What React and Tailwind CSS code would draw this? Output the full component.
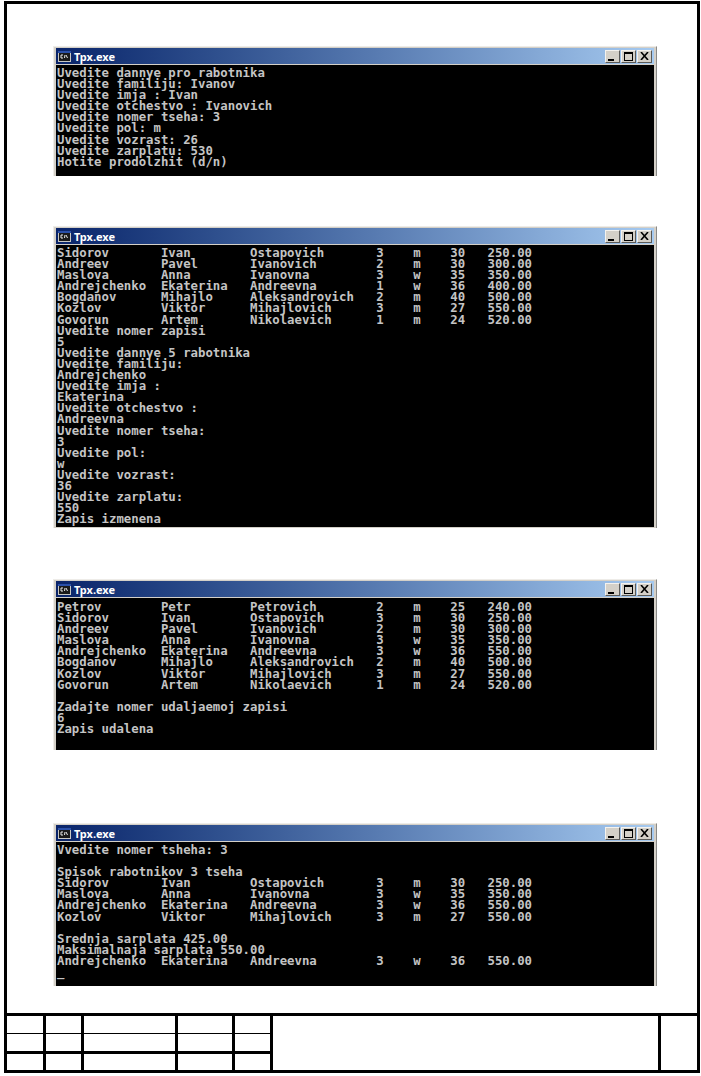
import React from 'react';

// fixed width console columns
const row = (a, b, c, d, e, f, g) =>
  a.padEnd(14) + b.padEnd(12) + c.padEnd(17) + d.padEnd(5) + e.padEnd(5) + f.padEnd(5) + g;

const win1 = [
  'Uvedite dannye pro rabotnika',
  'Uvedite familiju: Ivanov',
  'Uvedite imja : Ivan',
  'Uvedite otchestvo : Ivanovich',
  'Uvedite nomer tseha: 3',
  'Uvedite pol: m',
  'Uvedite vozrast: 26',
  'Uvedite zarplatu: 530',
  'Hotite prodolzhit (d/n)',
];

const win2 = [
  row('Sidorov', 'Ivan', 'Ostapovich', '3', 'm', '30', '250.00'),
  row('Andreev', 'Pavel', 'Ivanovich', '2', 'm', '30', '300.00'),
  row('Maslova', 'Anna', 'Ivanovna', '3', 'w', '35', '350.00'),
  row('Andrejchenko', 'Ekaterina', 'Andreevna', '1', 'w', '36', '400.00'),
  row('Bogdanov', 'Mihajlo', 'Aleksandrovich', '2', 'm', '40', '500.00'),
  row('Kozlov', 'Viktor', 'Mihajlovich', '3', 'm', '27', '550.00'),
  row('Govorun', 'Artem', 'Nikolaevich', '1', 'm', '24', '520.00'),
  'Uvedite nomer zapisi',
  '5',
  'Uvedite dannye 5 rabotnika',
  'Uvedite familiju:',
  'Andrejchenko',
  'Uvedite imja :',
  'Ekaterina',
  'Uvedite otchestvo :',
  'Andreevna',
  'Uvedite nomer tseha:',
  '3',
  'Uvedite pol:',
  'w',
  'Uvedite vozrast:',
  '36',
  'Uvedite zarplatu:',
  '550',
  'Zapis izmenena',
];

const win3 = [
  row('Petrov', 'Petr', 'Petrovich', '2', 'm', '25', '240.00'),
  row('Sidorov', 'Ivan', 'Ostapovich', '3', 'm', '30', '250.00'),
  row('Andreev', 'Pavel', 'Ivanovich', '2', 'm', '30', '300.00'),
  row('Maslova', 'Anna', 'Ivanovna', '3', 'w', '35', '350.00'),
  row('Andrejchenko', 'Ekaterina', 'Andreevna', '3', 'w', '36', '550.00'),
  row('Bogdanov', 'Mihajlo', 'Aleksandrovich', '2', 'm', '40', '500.00'),
  row('Kozlov', 'Viktor', 'Mihajlovich', '3', 'm', '27', '550.00'),
  row('Govorun', 'Artem', 'Nikolaevich', '1', 'm', '24', '520.00'),
  '',
  'Zadajte nomer udaljaemoj zapisi',
  '6',
  'Zapis udalena',
];

const win4 = [
  'Vvedite nomer tsheha: 3',
  '',
  'Spisok rabotnikov 3 tseha',
  row('Sidorov', 'Ivan', 'Ostapovich', '3', 'm', '30', '250.00'),
  row('Maslova', 'Anna', 'Ivanovna', '3', 'w', '35', '350.00'),
  row('Andrejchenko', 'Ekaterina', 'Andreevna', '3', 'w', '36', '550.00'),
  row('Kozlov', 'Viktor', 'Mihajlovich', '3', 'm', '27', '550.00'),
  '',
  'Srednja sarplata 425.00',
  'Maksimalnaja sarplata 550.00',
  row('Andrejchenko', 'Ekaterina', 'Andreevna', '3', 'w', '36', '550.00'),
  '_',
];

const WinButton = ({ children }) => (
  <div className="w-[15px] h-[13px] bg-[#d4d0c8] border border-[#f4f2ee] border-r-[#5a5a58] border-b-[#5a5a58] flex items-center justify-center">
    {children}
  </div>
);

const ConsoleWindow = ({ lines, bodyClass, className }) => (
  <div className={`w-[604px] ml-[46px] bg-[#d4d0c8] border-t border-l border-r border-[#eeece8] border-r-[#8a8a88] pl-[2px] pr-[2px] pt-px ${className}`}>
    <div className="h-[16px] flex items-center justify-between bg-gradient-to-r from-[#0a246a] to-[#a6caf0]">
      <div className="flex items-center gap-[3px] pl-[2px]">
        <svg width="13" height="11" viewBox="0 0 13 11">
          <rect width="13" height="11" fill="#c8c8c4" />
          <rect x="0" y="0" width="13" height="2" fill="#2a4fa8" />
          <rect x="1" y="2" width="11" height="8" fill="#1a1a1a" />
          <path d="M5 4H3v3h2M6.5 7L7 4M8 4l1.5 3" stroke="#e8e8e8" strokeWidth="1" fill="none" />
        </svg>
        <span className="text-white font-bold text-[11px] leading-none font-['Noto_Sans',sans-serif]">Tpx.exe</span>
      </div>
      <div className="flex gap-px pr-[2px]">
        <WinButton>
          <div className="w-[6px] h-[2px] bg-black mt-[7px] mr-[3px]" />
        </WinButton>
        <WinButton>
          <div className="w-[9px] h-[9px] border border-black border-t-2" />
        </WinButton>
        <WinButton>
          <svg width="9" height="8" viewBox="0 0 9 8">
            <path d="M1 0l7 8M8 0L1 8" stroke="#000" strokeWidth="1.6" />
          </svg>
        </WinButton>
      </div>
    </div>
    <pre
      className={`mt-px bg-black text-[#c4c4c4] font-['DejaVu_Sans_Mono',monospace] font-bold text-[12.33px] leading-[11.1px] overflow-hidden pl-px ${bodyClass}`}
    >
      {lines.join('\n')}
    </pre>
  </div>
);

const StampRow = ({ border }) => (
  <div className={`flex ${border}`}>
    <div className="w-[39px] shrink-0 border-r-[3px] border-black" />
    <div className="w-[38px] shrink-0 border-r-[3px] border-black" />
    <div className="w-[94px] shrink-0 border-r-[3px] border-black" />
    <div className="w-[57px] shrink-0 border-r-[3px] border-black" />
    <div className="flex-1" />
  </div>
);

export default function App() {
  return (
    <div className="w-[701px] h-[1076px] bg-white overflow-hidden pt-px pl-[4px]">
      <div className="w-[696px] h-[1072px] border-[3px] border-black flex flex-col">
        <ConsoleWindow lines={win1} bodyClass="h-[111px] pt-[3px]" className="mt-[42px]" />
        <ConsoleWindow lines={win2} bodyClass="h-[282px] pt-[3px]" className="mt-[50px] pb-px" />
        <ConsoleWindow lines={win3} bodyClass="h-[152px] pt-[4px]" className="mt-[51px]" />
        <ConsoleWindow lines={win4} bodyClass="h-[144px] pt-[3px]" className="mt-[73px]" />

        <div className="mt-auto h-[57px] border-t-[3px] border-black flex">
          <div className="w-[266px] shrink-0 flex flex-col border-r-[3px] border-black">
            <StampRow border="h-[18px] border-b border-black" />
            <StampRow border="h-[20px] border-b-[3px] border-black" />
            <StampRow border="flex-1" />
          </div>
          <div className="w-[388px] shrink-0 border-r-[3px] border-black" />
          <div className="flex-1" />
        </div>
      </div>
    </div>
  );
}
